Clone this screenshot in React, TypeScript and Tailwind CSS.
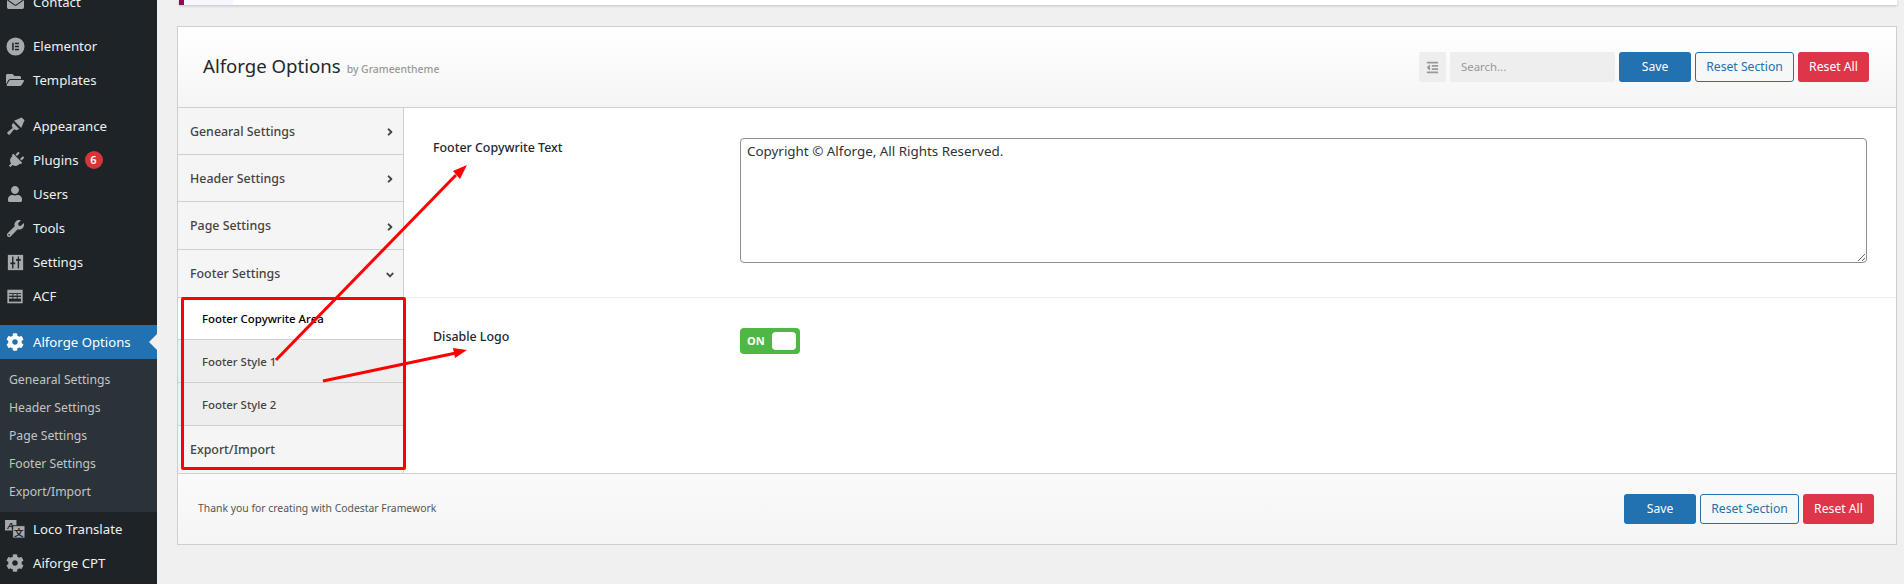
import type { ReactNode } from 'react';
import { FaAngleDown, FaAngleRight, FaCog, FaEnvelope, FaFolderOpen, FaOutdent, FaPlug, FaUser, FaWrench } from 'react-icons/fa';

function ElementorIcon() {
  return (
    <svg viewBox="0 0 20 20" className="h-[19px] w-[19px]">
      <circle cx="10" cy="10" r="9.5" fill="#a7aaad" />
      <rect x="6.5" y="6" width="1.6" height="8" fill="#1d2327" />
      <rect x="9.4" y="6" width="4.2" height="1.6" fill="#1d2327" />
      <rect x="9.4" y="9.2" width="4.2" height="1.6" fill="#1d2327" />
      <rect x="9.4" y="12.4" width="4.2" height="1.6" fill="#1d2327" />
    </svg>
  );
}

function BrushIcon() {
  return (
    <svg viewBox="0 0 20 20" className="h-[19px] w-[19px]" fill="#a7aaad">
      <path d="M8.5 4l8-3.500 3 3-3.500 8z" />
      <path d="M7.500 6l6.500 6.500-3 1.500-2.500-1-4.500 5.500c-1 1-3.500-1.500-2.500-2.500l5.500-4.500-1-2.500z" />
    </svg>
  );
}

function SettingsIcon() {
  return (
    <svg viewBox="0 0 20 20" className="h-[17px] w-[17px]">
      <rect x="1" y="1" width="18" height="18" fill="#a7aaad" />
      <rect x="6" y="3" width="1.6" height="14" fill="#1d2327" />
      <rect x="4" y="10" width="5.6" height="2" fill="#1d2327" />
      <rect x="12.6" y="3" width="1.6" height="14" fill="#1d2327" />
      <rect x="10.6" y="6" width="5.6" height="2" fill="#1d2327" />
    </svg>
  );
}

function AcfIcon() {
  return (
    <svg viewBox="0 0 20 20" className="h-[17px] w-[18px]">
      <rect x="1" y="2" width="18" height="16" fill="#a7aaad" />
      <rect x="3" y="6" width="14" height="10" fill="#1d2327" />
      <rect x="3" y="7" width="4" height="2" fill="#a7aaad" />
      <rect x="8" y="7" width="4" height="2" fill="#a7aaad" />
      <rect x="13" y="7" width="4" height="2" fill="#a7aaad" />
      <rect x="3" y="10.5" width="4" height="2" fill="#a7aaad" />
      <rect x="8" y="10.5" width="4" height="2" fill="#a7aaad" />
      <rect x="13" y="10.5" width="4" height="2" fill="#a7aaad" />
    </svg>
  );
}

function LocoIcon() {
  return (
    <svg viewBox="0 0 22 20" className="h-[19px] w-[21px]">
      <rect x="0" y="0" width="12" height="11" fill="#a7aaad" />
      <rect x="8" y="6" width="13" height="13" fill="#a7aaad" stroke="#1d2327" />
      <text x="2" y="9" fontSize="10" fontWeight="700" fontStyle="italic" fill="#1d2327" fontFamily="Liberation Sans, sans-serif">A</text>
      <text x="9.5" y="17" fontSize="10" fontWeight="700" fill="#1d2327" fontFamily="Noto Sans CJK SC, sans-serif">文</text>
    </svg>
  );
}

function MenuItem({ icon, label, active, badge }: { icon: ReactNode; label: string; active?: boolean; badge?: string }) {
  return (
    <div className={`relative flex h-[34px] shrink-0 items-center ${active ? 'bg-[#2271b1] text-white' : 'text-[#f0f0f1]'}`}>
      <span className={`flex w-[33px] justify-center pr-[3px] ${active ? 'text-white' : 'text-[#a7aaad]'}`}>{icon}</span>
      <span className="pt-[2px] text-[13.2px]">{label}</span>
      {badge && (
        <span className="ml-[6px] flex h-[18px] w-[18px] items-center justify-center rounded-full bg-[#d63638] text-[11px] font-semibold text-white">
          {badge}
        </span>
      )}
      {active && (
        <span className="absolute right-0 top-[9px] h-0 w-0 border-y-[8px] border-r-[8px] border-y-transparent border-r-[#f0f0f1]" />
      )}
    </div>
  );
}

function Sidebar() {
  return (
    <aside className="flex h-[584px] w-[157px] shrink-0 flex-col overflow-hidden bg-[#1d2327]">
      <div className="-mt-[15px]">
        <MenuItem icon={<FaEnvelope size={17} />} label="Contact" />
      </div>
      <div className="mt-[10px]">
        <MenuItem icon={<ElementorIcon />} label="Elementor" />
        <MenuItem icon={<FaFolderOpen size={18} />} label="Templates" />
      </div>
      <div className="mt-[12px]">
        <MenuItem icon={<BrushIcon />} label="Appearance" />
        <MenuItem icon={<FaPlug size={17} className="rotate-45" />} label="Plugins" badge="6" />
        <MenuItem icon={<FaUser size={16} />} label="Users" />
        <MenuItem icon={<FaWrench size={17} />} label="Tools" />
        <MenuItem icon={<SettingsIcon />} label="Settings" />
        <MenuItem icon={<AcfIcon />} label="ACF" />
      </div>
      <div className="mt-[12px]">
        <MenuItem icon={<FaCog size={18} />} label="Alforge Options" active />
      </div>
      <div className="bg-[#2c3338] pb-[6px] pt-[7px] text-[12.2px] text-[#c3c4c7]">
        {['Genearal Settings', 'Header Settings', 'Page Settings', 'Footer Settings', 'Export/Import'].map((s) => (
          <div key={s} className="flex h-[28px] items-center pl-[9px]">{s}</div>
        ))}
      </div>
      <MenuItem icon={<LocoIcon />} label="Loco Translate" />
      <MenuItem icon={<FaCog size={18} />} label="Aiforge CPT" />
    </aside>
  );
}

function ActionButtons() {
  return (
    <div className="flex gap-[4px] text-[12.2px]">
      <button className="h-[30px] w-[72px] rounded-[3px] bg-[#2271b1] text-white">Save</button>
      <button className="h-[30px] w-[99px] rounded-[3px] border border-[#2271b1] bg-[#f6f7f7] text-[#2271b1]">Reset Section</button>
      <button className="h-[30px] w-[71px] rounded-[3px] bg-[#df3548] text-white">Reset All</button>
    </div>
  );
}

function NavItem({ label, open, height }: { label: string; open?: boolean; height: string }) {
  return (
    <div className={`flex items-center justify-between border-b border-[#ccd0d4] pl-[12px] pr-[7px] pt-[2px] text-[12.4px] font-medium text-[#444] ${height}`}>
      <span>{label}</span>
      {open ? <FaAngleDown size={12} className="text-[#444]" /> : <FaAngleRight size={12} className="text-[#444]" />}
    </div>
  );
}

function Panel() {
  return (
    <div className="mt-[21px] border border-[#ccd0d4] bg-white">
      <header className="flex h-[81px] items-center justify-between border-b border-[#ccd0d4] bg-gradient-to-b from-white to-[#f5f5f5] pl-[25px] pr-[27px]">
        <div className="flex items-baseline gap-[6px] pb-[2px]">
          <h1 className="text-[18.6px] text-[#23282d]">Alforge Options</h1>
          <small className="text-[10.4px] font-medium text-[#999]">by Grameentheme</small>
        </div>
        <div className="flex gap-[4px]">
          <span className="flex h-[30px] w-[27px] items-center justify-center rounded-[2px] bg-[#eee] text-[#999]">
            <FaOutdent size={13} />
          </span>
          <div className="flex h-[30px] w-[165px] items-center rounded-[2px] bg-[#eee] pl-[11px] text-[11.4px] text-[#999]">Search...</div>
          <ActionButtons />
        </div>
      </header>
      <div className="flex">
        <nav className="w-[226px] shrink-0 border-r border-[#ccd0d4] bg-[#f5f5f5]">
          <NavItem label="Genearal Settings" height="h-[47px]" />
          <NavItem label="Header Settings" height="h-[47px]" />
          <NavItem label="Page Settings" height="h-[48px]" />
          <NavItem label="Footer Settings" height="h-[48px]" open />
          <div className="flex h-[42px] items-center border-b border-[#ccd0d4] bg-white pl-[24px] text-[11.4px] font-medium text-black">Footer Copywrite Area</div>
          <div className="flex h-[43px] items-center border-b border-[#ccd0d4] bg-[#eee] pl-[24px] pt-[2px] text-[11.4px] font-medium text-[#444]">Footer Style 1</div>
          <div className="flex h-[43px] items-center border-b border-[#ccd0d4] bg-[#eee] pl-[24px] pt-[2px] text-[11.4px] font-medium text-[#444]">Footer Style 2</div>
          <div className="flex h-[47px] items-center pl-[12px] pt-[2px] text-[12.4px] font-medium text-[#444]">Export/Import</div>
        </nav>
        <div className="flex-1">
          <div className="flex h-[190px] border-b border-[#eee] pb-[33px] pl-[29px] pr-[29px] pt-[30px]">
            <div className="w-[307px] shrink-0 text-[12.4px] font-medium leading-[20px] text-[#23282d]">Footer Copywrite Text</div>
            <textarea
              readOnly
              defaultValue="Copyright © Alforge, All Rights Reserved."
              className="h-[125px] flex-1 rounded-[4px] border border-[#8c8f94] bg-white px-[6px] py-[2px] text-[13.4px] text-[#2c3338] outline-none"
            />
          </div>
          <div className="flex pl-[29px] pr-[29px] pt-[30px]">
            <div className="w-[307px] shrink-0 text-[12.4px] font-medium leading-[18px] text-[#23282d]">Disable Logo</div>
            <div className="flex h-[26px] w-[60px] items-center justify-between rounded-[4px] bg-[#4fb845] pl-[7px] pr-[4px]">
              <span className="text-[11px] font-bold text-white">ON</span>
              <span className="h-[18px] w-[24px] rounded-[4px] bg-white" />
            </div>
          </div>
        </div>
      </div>
      <footer className="flex h-[71px] items-center justify-between border-t border-[#ccd0d4] bg-gradient-to-b from-[#fafafa] to-[#f5f5f5] pl-[20px] pr-[22px]">
        <span className="text-[10.4px] text-[#555]">Thank you for creating with Codestar Framework</span>
        <ActionButtons />
      </footer>
    </div>
  );
}

// red markup someone drew over the screenshot
function Annotations() {
  return (
    <>
      <div className="pointer-events-none absolute left-[181px] top-[297px] h-[173px] w-[225px] rounded-[2px] border-[3px] border-[#ff0000]" />
      <svg className="pointer-events-none absolute left-0 top-0 h-[584px] w-[1904px]" viewBox="0 0 1904 584">
        <line x1="276" y1="360" x2="456" y2="175" stroke="#ff0000" strokeWidth="3" />
        <polygon points="467,165 453,171 460,179" fill="#ff0000" />
        <line x1="323" y1="381" x2="456" y2="353" stroke="#ff0000" strokeWidth="3" />
        <polygon points="467,350 453,348 455,358" fill="#ff0000" />
      </svg>
    </>
  );
}

export default function App() {
  return (
    <div className="relative flex h-[584px] w-[1904px] overflow-hidden bg-[#f0f0f1] font-['Noto_Sans',sans-serif]">
      <Sidebar />
      <main className="ml-[20px] w-[1720px]">
        <div className="ml-[2px] flex h-[5px] bg-white shadow-[0_1px_3px_rgba(0,0,0,0.2)]">
          <span className="w-[5px] bg-[#8a0c56]" />
          <span className="w-[49px] bg-[#f6f7ff]" />
        </div>
        <Panel />
      </main>
      <Annotations />
    </div>
  );
}
